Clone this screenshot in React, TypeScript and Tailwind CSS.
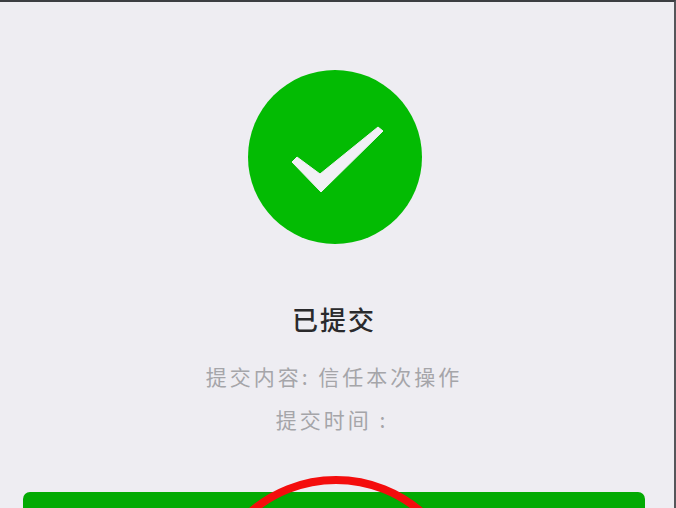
export default function App() {
  return (
    <div className="relative flex h-[508px] w-[676px] flex-col items-center overflow-hidden border-t-[2px] border-r-[2px] border-t-[#3c3e42] border-r-[#55565a] bg-[#eeedf2] pt-[68px] font-['Noto_Sans_CJK_SC',sans-serif]">
      {/* Success icon */}
      <div className="mr-[4px] flex h-[174px] w-[174px] shrink-0 items-center justify-center rounded-full bg-[#03bb03]">
        <svg viewBox="0 0 174 174" className="h-[174px] w-[174px]">
          <polygon points="44,92 49,87 72,104 130,57 135,61 73,122" fill="#f1f0f5" stroke="#f1f0f5" strokeWidth="1" strokeLinejoin="round" />
        </svg>
      </div>

      <h1 className="mt-[56px] mr-[6px] text-[26px] leading-[38px] font-medium tracking-[2px] text-[#2a2a2c]">已提交</h1>

      <p className="mt-[22px] mr-[6px] text-[21px] leading-[32px] tracking-[3px] font-normal text-[#a5a5a9]">提交内容: 信任本次操作</p>
      <p className="mt-[11px] mr-[10px] text-[21px] leading-[32px] tracking-[3px] font-normal text-[#a5a5a9]">提交时间 :</p>

      {/* Confirm button, cut off by the frame */}
      <div className="mt-[57px] mr-[6px] h-[60px] w-[622px] shrink-0 rounded-[7px] bg-[#03aa03]" />

      {/* Red marker circled over the button */}
      <div className="absolute top-[474px] left-[202px] h-[268px] w-[268px] rounded-full border-[8px] border-[#f40d0d]" />
    </div>
  );
}
